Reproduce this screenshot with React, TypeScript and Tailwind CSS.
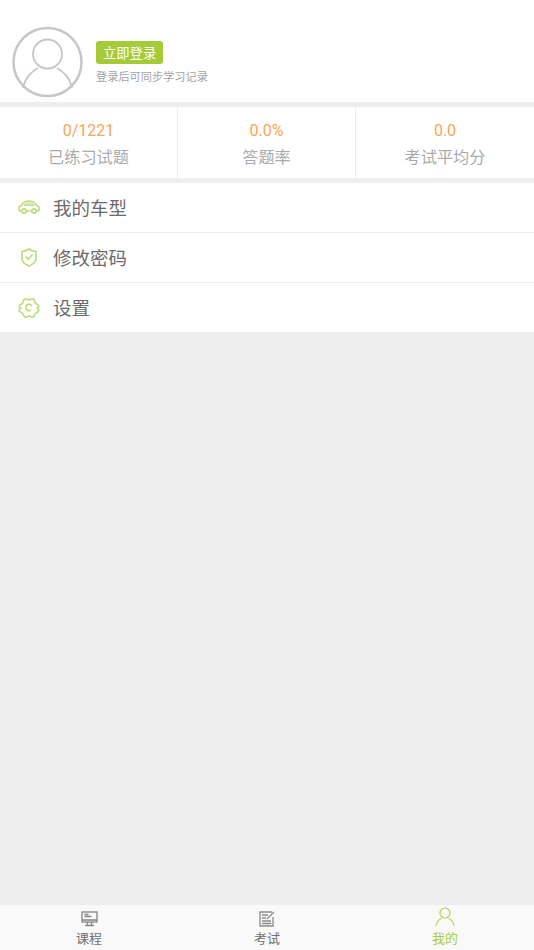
import React from "react";

const cjk = { fontFamily: '"Roboto", "Noto Sans CJK SC", sans-serif' };

function Avatar() {
  return (
    <svg width="72" height="72" viewBox="0 0 72 72" fill="none" stroke="#c6c6c6" strokeWidth="2.5">
      <circle cx="35.500" cy="36" r="34" />
      <circle cx="35.500" cy="28" r="14.500" strokeWidth="1.800" />
      <path d="M11 62c2-10 9-17 15-20M60 62c-2-10-9-17-15-20" strokeWidth="1.800" />
    </svg>
  );
}

function Car() {
  return (
    <svg width="22" height="15" viewBox="0 0 22 15" fill="none" stroke="#bfdc80" strokeWidth="1.700">
      <path d="M4 11H2.500C1.500 11 1 10.200 1 9.200V7.500C1 6.500 2 5.800 3.500 5.500 5 2.500 7 1 11 1s6 1.500 7.500 4.500C20 5.800 21 6.500 21 7.500v1.700c0 1-.5 1.800-1.500 1.800H18M8 11h6" />
      <path d="M6 5.500c1-1.800 2.500-2.500 5-2.500s4 .7 5 2.500z" fill="#bfdc80" fillOpacity="0.5" strokeWidth="1" />
      <circle cx="6" cy="11" r="2.200" />
      <circle cx="16" cy="11" r="2.200" />
    </svg>
  );
}

function Shield() {
  return (
    <svg width="16" height="19" viewBox="0 0 16 19" fill="none" stroke="#bfdc80" strokeWidth="1.700">
      <path d="M8 1c2 1.500 4 2.200 7 2.500v7c0 3.500-3.500 6-7 7.500-3.500-1.500-7-4-7-7.500v-7C4 3.200 6 2.500 8 1z" />
      <path d="M4.500 8.500l2.700 2.700 4.300-4.700" />
    </svg>
  );
}

function Gear() {
  return (
    <svg width="22" height="22" viewBox="0 0 22 22" fill="none" stroke="#bfdc80" strokeWidth="1.700">
      <path d="M11 2.800C12.800 2.800 14 1.200 15.500 2c1.500.8.900 2.800 1.800 4 .9 1.300 3 1.600 3.400 3.100.3 1.400-1.300 1.900-1.300 1.900s1.600 1.300 1.300 2.700c-.4 1.600-2.500 1.600-3.400 2.800-.9 1.200-1 3-2.500 3.600-1.500.5-2.800-1.200-3.800-1.200s-2.300 1.700-3.800 1.200c-1.500-.6-1.600-2.400-2.500-3.600-.9-1.200-3-1.200-3.400-2.800C1 12.300 2.600 11 2.600 11S1 10.500 1.300 9.100c.4-1.500 2.500-1.800 3.400-3.100.9-1.200.3-3.200 1.800-4C8 1.200 9.200 2.800 11 2.800z" />
      <path d="M14 9c-1-2-3.500-2.300-5-1-1.500 1.300-1.500 3.800 0 5 1.300 1 3 .8 3.800-.3" />
    </svg>
  );
}

function Screen() {
  return (
    <svg width="17" height="16" viewBox="0 0 17 16" fill="none" stroke="#858585" strokeWidth="1.300">
      <rect x="1" y="1" width="15" height="10" />
      <path d="M1 9h15M3.500 3.500h4M3.500 5.500h7M6.500 11v3M10.500 11v3M4 14.500h9" />
    </svg>
  );
}

function Exam() {
  return (
    <svg width="17" height="16" viewBox="0 0 17 16" fill="none" stroke="#8c8c8c" strokeWidth="1.300">
      <path d="M14 6v9H1V1h12" />
      <path d="M3 4h6M3 7h4M3 10h9M3 12.500h9M8 8l7-7" />
    </svg>
  );
}

function Person() {
  return (
    <svg width="20" height="20" viewBox="0 0 20 20" fill="none" stroke="#b4d455" strokeWidth="1.200">
      <circle cx="10" cy="6" r="5" />
      <path d="M1 19c.5-4 3-6.500 5.500-7.800M19 19c-.5-4-3-6.500-5.500-7.800" />
    </svg>
  );
}

function Stat({ value, label, border }: { value: string; label: string; border?: boolean }) {
  return (
    <div className={`w-[178px] flex flex-col items-center ${border ? "border-r border-[#eeeeee]" : ""}`}>
      <div className="mt-[13px] text-[16px] leading-[22px] text-[#fca556]">{value}</div>
      <div className="mt-[5px] text-[16.200px] leading-[22px] text-[#ababab]">{label}</div>
    </div>
  );
}

function Row({ icon, label, border }: { icon: React.ReactNode; label: string; border?: boolean }) {
  return (
    <div className={`flex items-center h-[50px] ${border ? "border-b border-[#eeeeee]" : ""}`}>
      <div className="w-[57px] flex justify-center shrink-0">{icon}</div>
      <span className="-ml-[4px] pt-[2px] text-[18.500px] leading-[24px] text-[#6b6b6b]">{label}</span>
    </div>
  );
}

function Tab({ icon, label, active }: { icon: React.ReactNode; label: string; active?: boolean }) {
  return (
    <div className="flex-1 flex flex-col items-center">
      <div className="h-[20px] flex items-end justify-center">{icon}</div>
      <span className={`mt-[3px] text-[13px] leading-[18px] ${active ? "text-[#a9cf38]" : "text-[#707070]"}`}>{label}</span>
    </div>
  );
}

export default function App() {
  return (
    <div style={cjk} className="w-[534px] h-[950px] flex flex-col bg-[#eeeeee] overflow-hidden">
      <div className="h-[102px] bg-white flex items-end pl-[12px] pb-[4px]">
        <Avatar />
        <div className="ml-[12px] mb-[11px] flex flex-col items-start">
          <div className="h-[23px] px-[7px] rounded-[3px] bg-[#a6cb38] text-white text-[13.300px] leading-[25px]">立即登录</div>
          <div className="mt-[5px] text-[11.200px] leading-[18px] text-[#a3a3a3]">登录后可同步学习记录</div>
        </div>
      </div>
      <div className="mt-[5px] h-[71px] bg-white flex">
        <Stat value="0/1221" label="已练习试题" border />
        <Stat value="0.0%" label="答题率" border />
        <Stat value="0.0" label="考试平均分" />
      </div>
      <div className="mt-[5px] bg-white h-[149px] overflow-hidden">
        <Row icon={<Car />} label="我的车型" border />
        <Row icon={<Shield />} label="修改密码" border />
        <Row icon={<Gear />} label="设置" />
      </div>
      <div className="flex-1" />
      <div className="h-[45px] bg-[#f9f9f9] flex pt-[2px]">
        <Tab icon={<Screen />} label="课程" />
        <Tab icon={<Exam />} label="考试" />
        <Tab icon={<Person />} label="我的" active />
      </div>
    </div>
  );
}
